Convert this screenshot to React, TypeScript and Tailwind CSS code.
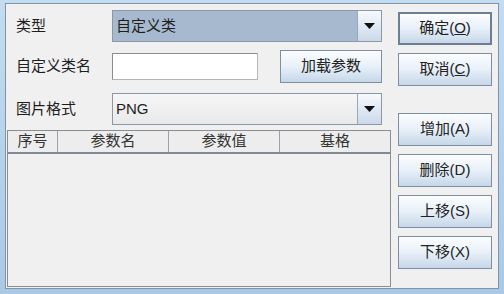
import React from "react";

const FONT = "font-['Liberation_Sans','Noto_Sans_CJK_SC',sans-serif]";

const Arrow: React.FC = () => (
  <svg width="11" height="6" viewBox="0 0 11 6">
    <polygon points="0,0 11,0 5.5,6" fill="#111" />
  </svg>
);

interface ComboProps {
  value: string;
  selected?: boolean;
}

const Combo: React.FC<ComboProps> = ({ value, selected }) => (
  <div className="flex h-[32px] w-[270px] border border-[#8a98a8]">
    <div
      className={
        "flex flex-1 items-center pl-[3px] text-[15px] text-[#1e1e1e] " +
        (selected
          ? "bg-[#a7b9ce]"
          : "bg-gradient-to-b from-[#f6f6f6] to-[#e9e9e9]")
      }
    >
      {value}
    </div>
    <div className="flex w-[24px] items-center justify-center border-l border-[#9aa8b8] bg-gradient-to-b from-[#f7fafd] to-[#c9d9ea]">
      <Arrow />
    </div>
  </div>
);

interface BtnProps {
  label: string;
  mnemonic?: string;
  underline?: boolean;
  primary?: boolean;
  className?: string;
}

const Btn: React.FC<BtnProps> = ({
  label,
  mnemonic,
  underline,
  primary,
  className,
}) => (
  <button
    className={
      "flex h-[33px] items-center justify-center bg-gradient-to-b from-[#fbfdff] via-[#e8f0f8] to-[#c6d7e9] text-[15px] text-[#222] " +
      (primary
        ? "border-2 border-[#6e7f92] "
        : "border border-[#7f8fa1] ") +
      (className ?? "")
    }
  >
    {label}
    {mnemonic && (
      <span>
        (<span className={underline ? "underline" : ""}>{mnemonic}</span>)
      </span>
    )}
  </button>
);

const columns = [
  { title: "序号", w: "w-[50px]" },
  { title: "参数名", w: "w-[111px]" },
  { title: "参数值", w: "w-[111px]" },
  { title: "基格", w: "flex-1" },
];

export default function App() {
  return (
    <div
      className={
        "h-[294px] w-[504px] bg-gradient-to-b from-[#c4dcf0] to-[#a9c9e6] pb-[5px] pl-[5px] pr-[5px] pt-[3px] " +
        FONT
      }
    >
      <div className="flex h-full w-full border border-[#8094a8] bg-[#f0f0f0]">
        {/* left column */}
        <div className="flex w-[385px] flex-col pl-[1px]">
          <div className="mt-[6px] flex items-center">
            <span className="w-[105px] pl-[9px] text-[15px] text-[#1e1e1e]">
              类型
            </span>
            <Combo value="自定义类" selected />
          </div>

          <div className="mt-[8px] flex h-[33px] items-center">
            <span className="w-[105px] pl-[9px] text-[15px] text-[#1e1e1e]">
              自定义类名
            </span>
            <div className="h-[27px] w-[146px] border border-t-[#8c8c8c] border-l-[#8c8c8c] border-r-[#b5b5b5] border-b-[#b5b5b5] bg-white" />
            <Btn label="加载参数" className="ml-[22px] w-[102px]" />
          </div>

          <div className="mt-[10px] flex items-center">
            <span className="w-[105px] pl-[9px] text-[15px] text-[#1e1e1e]">
              图片格式
            </span>
            <Combo value="PNG" />
          </div>

          <div className="mb-[1px] mt-[5px] flex flex-1 flex-col border border-[#8a8e94]">
            <div className="flex h-[23px] border-b-2 border-[#7e8a98] bg-[#ededed]">
              {columns.map((c, i) => (
                <div
                  key={c.title}
                  className={
                    "flex items-center justify-center text-[15px] text-[#333] " +
                    c.w +
                    (i < columns.length - 1
                      ? " border-r border-[#9aa2ab]"
                      : "")
                  }
                >
                  {c.title}
                </div>
              ))}
            </div>
            <div className="flex-1 bg-[#f0f0f0]" />
          </div>
        </div>

        {/* right buttons */}
        <div className="ml-[7px] flex w-[94px] flex-col pt-[8px]">
          <Btn label="确定" mnemonic="O" underline primary />
          <Btn label="取消" mnemonic="C" underline className="mt-[8px]" />
          <Btn label="增加" mnemonic="A" className="mt-[27px]" />
          <Btn label="删除" mnemonic="D" className="mt-[8px]" />
          <Btn label="上移" mnemonic="S" className="mt-[8px]" />
          <Btn label="下移" mnemonic="X" className="mt-[8px]" />
        </div>
      </div>
    </div>
  );
}
